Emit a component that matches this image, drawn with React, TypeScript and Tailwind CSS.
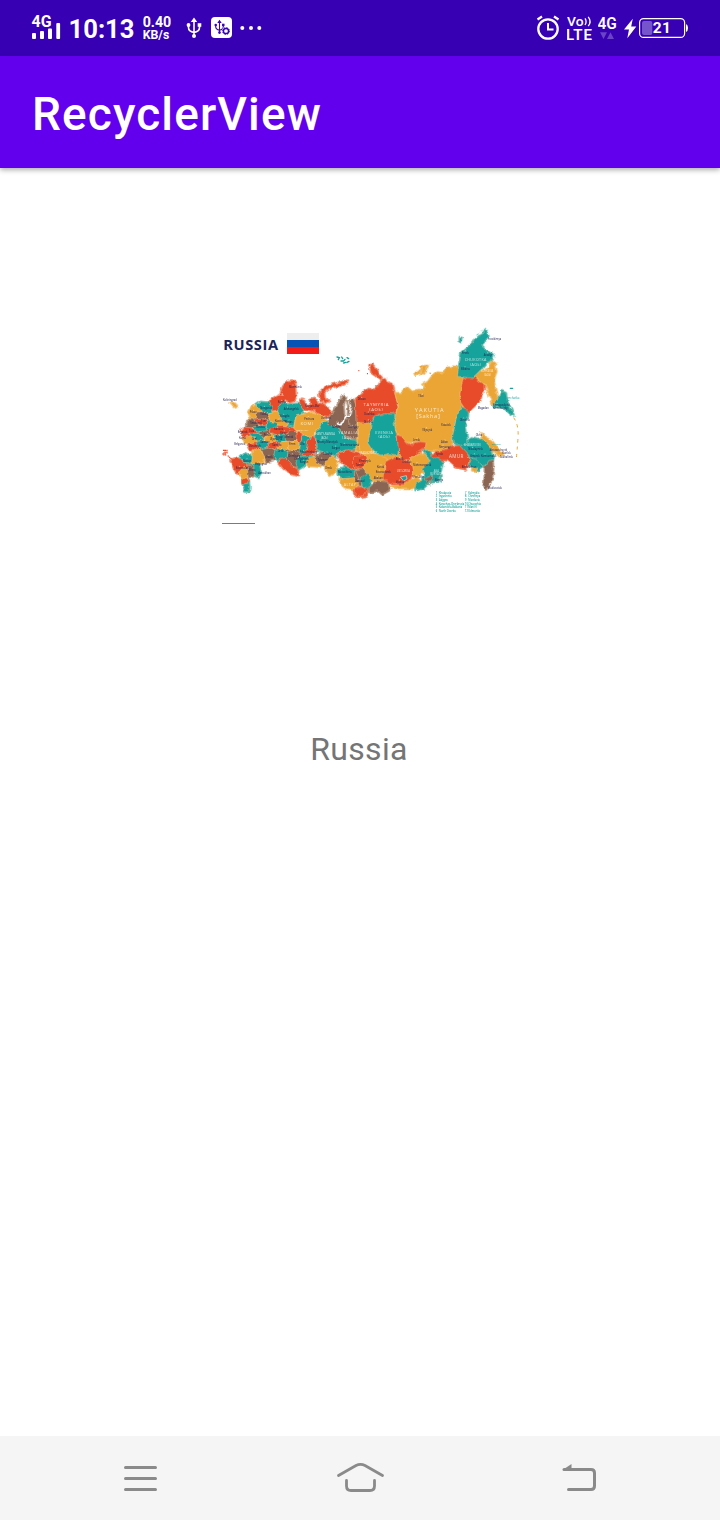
import React from "react";

const RED = "#e84c2b";
const GOLD = "#eba536";
const TEAL = "#16a39b";
const BROWN = "#8a6553";

type Region = [string, string];

/* Map regions, 3 units per pixel */
const westRegions: Region[] = [
  [RED, "M152 236 L176 218 196 204 204 184 216 168 236 166 244 184 246 212 238 226 222 230 210 224 204 238 184 256 166 258Z"],
  [RED, "M312 206 L330 188 352 178 394 166 398 174 370 184 344 190 328 204 330 222 344 226 334 234 318 226Z"],
  [RED, "M254 234 L260 220 268 232 276 244 290 238 286 222 300 218 308 232 326 238 340 250 352 262 344 274 322 272 302 258 282 254 256 250Z"],
  [GOLD, "M98 262 L108 246 126 238 142 256 134 276 104 282Z"],
  [TEAL, "M124 238 L134 230 160 232 172 252 166 264 140 260Z"],
  [BROWN, "M120 262 L146 260 166 266 160 284 130 284Z"],
  [TEAL, "M190 250 L200 232 216 238 248 232 264 250 262 268 242 276 236 304 214 298 196 282 186 262Z"],
  [GOLD, "M160 262 L188 258 200 282 222 294 212 306 186 302 164 288Z"],
  [GOLD, "M244 272 L290 262 326 270 332 286 318 296 304 312 298 330 276 336 262 322 244 326 236 308Z"],
  [BROWN, "M96 288 L118 282 134 298 122 308 96 312Z"],
  [RED, "M120 286 L150 280 160 292 148 304 128 302Z"],
  [TEAL, "M114 306 L138 300 156 306 150 322 122 320Z"],
  [RED, "M76 316 L92 306 118 310 128 326 112 340 86 336Z"],
  [TEAL, "M156 290 L184 292 190 306 170 314 154 304Z"],
  [RED, "M168 308 L202 304 234 308 244 318 222 328 190 330 166 322Z"],
  [BROWN, "M132 320 L160 316 170 330 158 342 134 336Z"],
  [GOLD, "M82 338 L110 332 126 340 118 356 90 358Z"],
  [TEAL, "M104 324 L134 326 148 344 128 348Z"],
  [GOLD, "M150 334 L176 328 188 344 170 354 148 346Z"],
  [TEAL, "M180 330 L214 326 220 346 196 352 180 344Z"],
  [BROWN, "M206 330 L228 318 250 322 248 346 224 352 210 348Z"],
  [RED, "M96 354 L122 350 140 360 128 380 104 374Z"],
  [TEAL, "M122 350 L152 346 162 362 144 372 128 366Z"],
  [RED, "M160 350 L188 348 198 362 180 372 160 368Z"],
  [BROWN, "M142 370 L166 366 188 378 180 404 156 412 144 390Z"],
  [GOLD, "M116 378 L128 372 138 378 150 396 146 412 124 418 108 410Z"],
  [GOLD, "M196 350 L226 348 220 366 204 378 188 364Z"],
  [TEAL, "M180 374 L204 370 218 380 214 402 190 408 176 392Z"],
  [GOLD, "M226 352 L250 346 252 368 236 378 220 370Z"],
  [RED, "M246 318 L262 322 258 354 246 352Z"],
  [TEAL, "M252 364 L262 334 282 332 290 346 276 366 270 388 252 382Z"],
  [BROWN, "M216 380 L236 374 256 388 248 410 260 426 232 426 212 408Z"],
  [RED, "M278 352 L292 332 302 342 302 376 292 396 262 392 274 374Z"],
  [TEAL, "M252 394 L292 392 284 408 266 424 250 434 242 412Z"],
  [RED, "M196 400 L210 398 230 420 248 434 252 454 230 448 206 432 192 414Z"],
  [GOLD, "M282 396 L302 394 322 400 316 426 282 424 272 416Z"],
  [BROWN, "M300 392 L326 378 356 390 342 408 334 422 306 416Z"],
  [TEAL, "M302 322 L322 292 350 288 356 306 382 322 390 340 424 342 432 358 420 374 376 380 362 396 330 382 304 374Z"],
  [BROWN, "M334 296 L352 270 368 238 386 212 394 216 386 244 388 268 394 276 404 258 396 230 414 228 424 252 424 284 432 312 430 342 396 340 372 312Z"],
  [BROWN, "M400 232 L414 220 422 238 428 256 422 304 402 300 398 278Z"],
  [GOLD, "M426 296 L444 300 452 388 420 380 430 352Z"],
  [RED, "M368 386 L400 374 426 382 452 388 450 422 424 434 392 424 374 408Z"],
  [GOLD, "M330 410 L350 394 368 408 364 438 346 450 330 432Z"],
  [TEAL, "M366 432 L392 426 420 436 418 460 388 462 368 450Z"],
  [BROWN, "M418 434 L448 432 452 454 438 484 418 476Z"],
  [GOLD, "M370 462 L416 458 432 478 416 496 388 490Z"],
  [RED, "M418 488 L438 484 460 490 456 512 438 516 420 506Z"],
  [RED, "M46 404 L66 398 90 412 100 428 88 440 66 446 56 430Z"],
  [TEAL, "M76 398 L90 384 112 394 110 416 88 416Z"],
  [GOLD, "M70 438 L90 426 104 438 98 462 82 464Z"],
  [BROWN, "M96 420 L120 416 128 436 116 454 100 458Z"],
  [TEAL, "M116 416 L132 414 138 444 130 456 118 450Z"],
  [TEAL, "M82 472 L100 464 104 486 100 500 90 500Z"],
  [RED, "M82 464 L94 458 102 468 94 480 82 478Z"],
  [GOLD, "M46 234 L58 232 64 244 56 246Z"],
];

const eastRegions: Region[] = [
  [GOLD, "M-10 270 L26 272 40 330 34 388 0 384 -4 330Z"],
  [GOLD, "M30 380 L116 376 130 400 80 420 60 400Z"],
  [RED, "M-14 226 L6 204 26 188 44 194 58 178 62 164 78 162 84 174 98 176 104 204 112 234 108 264 76 268 48 272 20 294 -12 292Z"],
  [RED, "M28 120 L38 118 50 134 54 146 68 152 62 164 46 152 34 144Z"],
  [GOLD, "M104 204 L124 204 142 188 156 200 176 194 188 196 194 184 186 178 204 170 214 156 232 142 250 144 264 128 284 124 302 132 304 154 314 168 300 216 312 244 290 272 284 312 276 330 278 354 262 370 226 376 200 374 176 352 142 352 116 330 104 304 108 266 114 240Z"],
  [GOLD, "M166 144 L182 132 180 140 168 150Z"],
  [GOLD, "M188 124 L204 122 198 136 190 146 184 144Z"],
  [TEAL, "M38 292 L42 274 68 270 76 266 104 268 102 292 108 326 118 362 112 390 84 386 60 392 36 374 22 352 32 322Z"],
  [RED, "M112 330 L126 334 142 356 154 362 164 354 182 350 198 352 196 370 174 384 148 404 126 404 116 386Z"],
  [GOLD, "M8 388 L36 384 68 392 82 402 74 430 76 464 50 470 16 458 10 422Z"],
  [RED, "M-20 392 L6 390 22 396 16 420 6 432 -20 426Z"],
  [BROWN, "M-14 434 L14 430 18 458 -2 470Z"],
  [TEAL, "M0 456 L22 448 34 462 26 486 8 490Z"],
  [BROWN, "M28 484 L52 466 84 472 88 496 66 508 56 498 28 502Z"],
  [RED, "M76 410 L102 396 130 404 154 412 160 438 150 468 132 482 96 478 72 462Z"],
  [RED, "M-18 488 L8 486 20 498 12 512 -8 516 -18 506Z"],
  [GOLD, "M152 400 L178 384 198 388 210 412 192 438 170 456 158 444Z"],
  [GOLD, "M88 484 L128 480 156 464 172 458 188 474 152 492 116 492Z"],
  [TEAL, "M192 378 L206 376 218 390 240 400 248 414 242 442 242 470 210 472 190 490 166 496 166 482 196 452 188 430 212 410Z"],
  [BROWN, "M196 460 L214 452 216 464 202 476Z"],
  [RED, "M228 380 L256 374 274 366 300 360 320 370 328 404 320 434 290 428 264 406 242 406 214 392Z"],
  [TEAL, "M290 274 L304 246 326 250 324 276 314 302 318 322 324 354 304 362 280 354 278 334Z"],
  [RED, "M308 164 L326 152 346 154 358 168 372 176 372 194 360 226 346 244 326 262 314 250 302 232 300 206Z"],
  [TEAL, "M292 154 L298 118 304 82 320 68 340 54 352 34 364 28 374 14 386 30 374 50 364 60 390 84 402 88 396 104 378 116 362 134 342 158 322 158Z"],
  [TEAL, "M296 36 L306 38 302 52 296 48Z"],
  [GOLD, "M342 154 L360 138 384 130 396 108 404 112 410 142 402 164 406 194 414 222 412 240 398 240 386 204 376 178 360 168Z"],
  [TEAL, "M412 222 L424 198 438 204 442 230 454 252 462 272 448 264 430 248 400 244Z"],
  [TEAL, "M302 362 L324 354 334 336 356 342 378 350 394 370 402 394 396 416 370 422 348 410 328 390Z"],
  [TEAL, "M326 396 L352 404 370 426 350 438 328 424Z"],
  [GOLD, "M336 428 L354 426 348 440 336 440Z"],
  [BROWN, "M374 430 L382 408 398 404 400 432 396 466 378 494 370 488 374 456Z"],
  [GOLD, "M362 324 L372 334 398 350 414 370 428 392 418 394 398 372 378 352 366 342Z"],
];

type Label = [number, number, string];
const cities: Label[] = [
  [24, 228, "Kaliningrad"], [222, 189, "Murmansk"], [206, 255, "Arkhangelsk"], [194, 277, "Vologda"], [188, 235, "Karelia"],
  [268, 284, "Pechora"], [136, 253, "Novgorod"], [104, 265, "Pskov"], [136, 271, "Valday"], [180, 291, "Kostroma"], [210, 294, "Kotlas"],
  [106, 296, "Smolensk"], [138, 291, "Tver"], [68, 325, "Bryansk"], [72, 343, "Kursk"], [58, 360, "Belgorod"], [102, 320, "Tula"],
  [122, 309, "Moscow"], [176, 316, "Ivanovo"], [196, 326, "Kirov"], [146, 334, "Penza"], [110, 345, "Orel"], [182, 340, "Kazan"],
  [164, 345, "Ulyanovsk"], [208, 340, "Izhevsk"], [136, 355, "Saratov"], [102, 366, "Voronezh"], [172, 362, "Samara"], [222, 360, "Perm"],
  [256, 360, "Ufa"], [306, 354, "Khanty-Mansiysk"], [350, 372, "Surgut"], [376, 364, "Nizhnevartovsk"], [318, 283, "Vorkuta"],
  [350, 310, "Nadym"], [400, 310, "Urengoy"], [254, 385, "Yekaterinburg"], [324, 390, "Tobolsk"], [308, 408, "Tyumen"],
  [220, 395, "Orenburg"], [188, 380, "Orsk"], [150, 400, "Uralsk"], [120, 420, "Volgograd"], [84, 410, "Rostov"], [62, 433, "Krasnodar"],
  [130, 447, "Astrakhan"], [102, 438, "Elista"], [254, 414, "Kurgan"], [330, 432, "Omsk"], [368, 443, "Novosibirsk"], [422, 424, "Tomsk"],
  [420, 472, "Barnaul"], [428, 226, "Dikson"], [432, 412, "Yeniseysk"], [270, 246, "Naryan-Mar"], [238, 406, "Chelyabinsk"],
  [448, 270, "Dudinka"], [448, 293, "Norilsk"], [610, 216, "Tiksi"], [622, 317, "Vilyuysk"], [678, 304, "Yakutsk"],
  [594, 348, "Lensk"], [678, 354, "Aldan"], [672, 369, "Neryungri"], [542, 406, "Bratsk"], [562, 414, "Ust-Kut"], [486, 428, "Kansk"],
  [482, 444, "Krasnoyarsk"], [476, 463, "Abakan"], [594, 422, "Nizhneangarsk"], [592, 460, "Ulan-Ude"], [542, 474, "Irkutsk"],
  [660, 468, "Borzya"], [662, 389, "Tynda"], [818, 46, "Providenya"], [740, 86, "Pevek"], [806, 92, "Anadyr"], [738, 134, "Bilibino"],
  [788, 252, "Magadan"], [734, 288, "Okhotsk"], [834, 244, "Petropavlovsk"], [834, 252, "Kamchatsky"], [782, 332, "Okha"],
  [824, 378, "Aleksandrovsk"], [862, 387, "Kurilsk"], [855, 398, "Sakhalinsk"], [760, 376, "Nikolayevsk"], [766, 395, "Amursk"],
  [798, 396, "Komsomolsk"], [740, 430, "Birobidzhan"], [819, 491, "Vladivostok"],
];

const legend: [number, number, string, string][] = [
  [662, 506, "1", "Khakassia"], [662, 517, "2", "Ingushetia"], [662, 528, "3", "Adygea"], [662, 539, "4", "Karachay-Cherkessia"],
  [662, 550, "5", "Kabardino-Balkaria"], [662, 561, "6", "North Ossetia"],
  [750, 506, "7", "Kalmykia"], [750, 517, "8", "Chechnya"], [750, 528, "9", "Mordovia"], [750, 539, "10", "Chuvashia"],
  [750, 550, "11", "Mari El"], [750, 561, "12", "Udmurtia"],
];

function RussiaMap() {
  return (
    <svg className="block h-[205px] w-[310px]" viewBox="0 0 930 615" fontFamily="'Open Sans', sans-serif">
      <defs>
        <filter id="coast" x="0" y="0" width="930" height="615" filterUnits="userSpaceOnUse">
          <feTurbulence type="fractalNoise" baseFrequency="0.05" numOctaves="3" seed="4" />
          <feDisplacementMap in="SourceGraphic" scale="14" xChannelSelector="R" yChannelSelector="G" />
        </filter>
      </defs>
      <text x="25" y="74" fontSize="44" fontWeight="700" fill="#1b2458" textLength="164" lengthAdjust="spacing">RUSSIA</text>
      <rect x="216" y="24" width="96" height="21" fill="#eeeeef" />
      <rect x="216" y="45" width="96" height="21" fill="#0753b5" />
      <rect x="216" y="66" width="96" height="21" fill="#f41b17" />
      <g filter="url(#coast)">
        <path d="M116 280 L234 290 244 350 270 390 244 424 210 408 170 390 120 370 88 354 94 310Z" fill={BROWN} />
        <g strokeWidth="5" strokeLinejoin="round">
          {westRegions.map(([fill, d], i) => <path key={i} d={d} fill={fill} stroke={fill} />)}
          <g transform="translate(435 0)">
            {eastRegions.map(([fill, d], i) => <path key={i} d={d} fill={fill} stroke={fill} />)}
          </g>
        </g>
        <g stroke="#f6dcae" strokeOpacity=".75" strokeWidth="1.5" strokeLinejoin="round">
          {westRegions.map(([fill, d], i) => <path key={i} d={d} fill={fill} />)}
          <g transform="translate(435 0)">
            {eastRegions.map(([fill, d], i) => <path key={i} d={d} fill={fill} />)}
          </g>
        </g>
        <path d="M362 288 L376 300 388 290 392 276 404 270 408 250 402 232" fill="none" stroke="#fff" strokeWidth="5" />
      </g>
      <path d="M24 376 h12 v8 h-12 v6 h10 M30 374 v16 M38 392 L52 404" fill="none" stroke={RED} strokeWidth="3.5" strokeDasharray="4 1.5" />
      <g fill="none" stroke={TEAL} strokeWidth="4" strokeLinecap="round">
        <path d="M366 96 l7 2 -3 6 M380 96 l3 5 M378 108 l8 0 4 -5 M396 98 l5 3 M386 114 l6 -2 M396 112 l6 -3" />
        <path d="M886 190 l7 0" />
      </g>
      <path d="M430 137 h3 M462 120 h3 M460 132 h3 M456 146 h3" stroke={RED} strokeWidth="4" />
      <path d="M614 126 l8 -3 M644 146 l3 -2" stroke={GOLD} strokeWidth="5" />
      <path d="M896 278 Q912 300 909 340 T904 400" fill="none" stroke={GOLD} strokeWidth="3" strokeDasharray="10 12" />

      <g fill="#fff" textAnchor="middle" opacity=".75">
        <text x="644" y="260" fontSize="17" letterSpacing="3">YAKUTIA</text>
        <text x="640" y="278" fontSize="17" letterSpacing="2">[Sakha]</text>
        <text x="484" y="244" fontSize="13" letterSpacing="2">TAYMYRIA</text>
        <text x="484" y="257" fontSize="13" letterSpacing="2">(AOk)</text>
        <text x="508" y="327" fontSize="11" letterSpacing="1.5">EVENKIA</text>
        <text x="508" y="340" fontSize="11" letterSpacing="1.5">(AOk)</text>
        <text x="782" y="108" fontSize="11" letterSpacing="1">CHUKOTKA</text>
        <text x="782" y="122" fontSize="11" letterSpacing="1">(AOk)</text>
        <text x="724" y="399" fontSize="14" letterSpacing="1">AMUR</text>
        <text x="276" y="301" fontSize="13" letterSpacing="1.5">KOMI</text>
        <text x="400" y="328" fontSize="11" letterSpacing="2">YAMALIA</text>
        <text x="400" y="341" fontSize="11" letterSpacing="2">(AOk)</text>
        <text x="405" y="484" fontSize="11" letterSpacing="1">ALTAY</text>
        <text x="328" y="331" fontSize="8">KHANTY-MANSIA</text>
        <text x="328" y="341" fontSize="8">(AOk)</text>
        <text x="772" y="364" fontSize="8">KHABAROVSK</text>
        <text x="816" y="142" fontSize="8">KORYAKIA</text>
        <text x="818" y="153" fontSize="8">(AOk)</text>
        <text x="460" y="386" fontSize="8">KRASNOYARSK</text>
        <text x="664" y="440" fontSize="8">AGA</text>
        <text x="664" y="450" fontSize="8">BURYATIA</text>
        <text x="565" y="440" fontSize="8">UST-ORDA</text>
        <text x="190" y="213" fontSize="8">KARELIA</text>
        <text x="262" y="317" fontSize="7">PERMYAKIA</text>
      </g>
      <path d="M556 456 l18 -4 2 10 -10 6Z" fill={TEAL} stroke="#fff" strokeWidth="1.5" />
      <text x="867" y="223" fontSize="9" fill={TEAL}>Kamchatka</text>
      <text x="830" y="359" fontSize="7" fill={TEAL}>Sakhalin</text>
      <g fill="#242052" fontSize="7.5" fontWeight="600" opacity=".8">
        {cities.map(([x, y, name]) => <text key={name} x={x} y={y}>{name}</text>)}
      </g>
      <g fill="#fff" opacity=".7">
        {cities.map(([x, y, name]) => <circle key={name} cx={x + 12} cy={y - 9} r="1.5" />)}
      </g>
      <g fill={TEAL} fontSize="7.5" fontWeight="600">
        {legend.map(([x, y, number, name]) => (
          <text key={name} x={x} y={y}>{number}<tspan x={x + 10}>{name}</tspan></text>
        ))}
      </g>
      <path d="M21 595.5 h99" stroke="#7b7b7b" strokeWidth="3" />
    </svg>
  );
}

function UsbGlyph({ className, color }: { className: string; color: string }) {
  return (
    <svg className={className} viewBox="0 0 16 22" fill="none" stroke={color} strokeWidth="1.6" strokeLinecap="round">
      <path d="M8 3 V19 M2.5 9 V10.5 Q2.5 14.5 8 15.5 Q13.5 14.5 13.5 10.5 V8" />
      <path d="M8 .5 L11.2 5 H4.8Z M6 19 a2 2 0 1 0 4 0 a2 2 0 1 0 -4 0" fill={color} stroke="none" />
      <circle cx="2.5" cy="8" r="1.9" fill={color} stroke="none" />
      <path d="M11.7 6.2 h3.6 v3.6 h-3.6Z" fill={color} stroke="none" />
    </svg>
  );
}

function StatusBar() {
  return (
    <header className="flex h-14 items-start justify-between bg-[#3700b3] pr-8 pl-[31px] text-white">
      <div className="flex h-14">
        <svg className="h-14 w-[38px]" viewBox="31 0 38 56" fill="#fff">
          <text x="31.5" y="27" fontSize="16" fontWeight="700" textLength="20" lengthAdjust="spacingAndGlyphs">4G</text>
          <rect x="32" y="33" width="4" height="6" rx="1" />
          <rect x="40" y="31" width="4" height="8" rx="1" />
          <rect x="48" y="28.5" width="4" height="10.5" rx="1" />
          <rect x="56.3" y="23" width="3.8" height="16" rx="1" />
        </svg>
        <svg className="h-14 w-[74px]" viewBox="69 0 74 56" fill="#fff">
          <text x="68.5" y="38" fontSize="25.5" fontWeight="700" textLength="66" lengthAdjust="spacingAndGlyphs">10:13</text>
        </svg>
        <svg className="h-14 w-[43px]" viewBox="143 0 43 56" fill="#fff" fontWeight="700">
          <text x="142.7" y="27.3" fontSize="14" textLength="28.5" lengthAdjust="spacingAndGlyphs">0.40</text>
          <text x="142.7" y="39.3" fontSize="12" textLength="26.5" lengthAdjust="spacingAndGlyphs">KB/s</text>
        </svg>
        <UsbGlyph className="mt-[17px] h-[22px] w-4" color="#fff" />
        <div className="mt-[17px] ml-[9px] flex size-[21px] rounded-[4px] bg-white pl-[3px]">
          <UsbGlyph className="mt-[2px] h-[16px] w-[11px] shrink-0" color="#3700b3" />
          <svg className="mt-[10px] -ml-[3px] size-[8px] shrink-0" viewBox="0 0 8 8">
            <circle cx="4" cy="4" r="4" fill="#fff" />
            <circle cx="4" cy="4" r="2.6" fill="none" stroke="#3700b3" strokeWidth="1.5" />
            <circle cx="4" cy="4" r="3.4" fill="none" stroke="#3700b3" strokeWidth="1" strokeDasharray="1.4 1.27" />
          </svg>
        </div>
        <svg className="mt-[25px] ml-2 h-[6px] w-6" viewBox="0 0 24 6" fill="#fff">
          <circle cx="2.3" cy="3" r="2" /><circle cx="11" cy="3" r="2" /><circle cx="19.3" cy="3" r="2" />
        </svg>
      </div>
      <div className="flex h-14">
        <svg className="h-14 w-[31px]" viewBox="536 0 31 56" fill="none" stroke="#fff">
          <circle cx="548" cy="29" r="9.7" strokeWidth="2.3" />
          <path d="M548 23 V29.5 H553.5" strokeWidth="2" />
          <path d="M537.5 19.5 L542 16.5 M554 16.5 L558.5 19.5" strokeWidth="2.3" />
        </svg>
        <svg className="h-14 w-[31px]" viewBox="567 0 31 56" fill="#fff">
          <text x="567" y="25.5" fontSize="13" fontWeight="500" textLength="16.5" lengthAdjust="spacingAndGlyphs">Vo</text>
          <path d="M585 18.3 Q587.2 21.5 585 25 M588.2 16.8 Q592 21.5 588.2 26" fill="none" stroke="#fff" strokeWidth="1.3" />
          <text x="566" y="40" fontSize="15" fontWeight="600" textLength="26" lengthAdjust="spacing">LTE</text>
        </svg>
        <svg className="h-14 w-[26px]" viewBox="598 0 26 56" fill="#fff">
          <text x="597.5" y="29.2" fontSize="16" fontWeight="600" textLength="19.3" lengthAdjust="spacingAndGlyphs">4G</text>
          <path d="M600 32.3 H607 L603.5 39Z M607 39 H614 L610.5 32.3Z" fill="#6a43c6" />
        </svg>
        <svg className="h-14 w-[15px]" viewBox="624 0 15 56" fill="#fff">
          <path d="M632.8 18.8 L624 29.5 H629 L627.3 38.3 L636.3 26.5 H631.2Z" />
        </svg>
        <svg className="h-14 w-[49px]" viewBox="639 0 49 56" fill="#fff">
          <rect x="639.6" y="18.6" width="45" height="18.8" rx="4" fill="none" stroke="#fff" strokeWidth="1.2" />
          <path d="M686 24 Q688 25 688 28 Q688 31 686 32Z" />
          <rect x="642" y="21" width="10.3" height="14" rx="2" fill="#7655cc" />
          <text x="652.8" y="33" fontSize="15.5" fontWeight="700" textLength="18" lengthAdjust="spacing">21</text>
        </svg>
      </div>
    </header>
  );
}

export default function App() {
  return (
    <div className="flex h-[1520px] w-[720px] flex-col overflow-hidden bg-white font-['Roboto',sans-serif]">
      <StatusBar />
      <div className="flex h-28 items-center bg-[#6200ee] pt-1 pl-8 shadow-[0_2px_5px_rgba(0,0,0,0.32)]">
        <h1 className="text-[46px] leading-[56px] font-medium tracking-[1.1px] text-white">RecyclerView</h1>
      </div>
      <main className="flex flex-1 flex-col items-center pt-[157px]">
        <div className="ml-5"><RussiaMap /></div>
        <p className="mt-[199px] -ml-[2px] text-[32px] leading-10 tracking-[0.35px] text-[#757575]">Russia</p>
      </main>
      <nav className="flex h-[84px] items-center justify-between bg-[#f5f5f5] px-[120px]">
        <svg className="h-[84px] w-10" viewBox="120 1436 40 84" stroke="#8a8a8a" strokeWidth="3" strokeLinecap="round">
          <path d="M125.5 1467.5 H155.5 M125.5 1478.5 H155.5 M125.5 1489.5 H155.5" />
        </svg>
        <svg className="h-[84px] w-[50px]" viewBox="335 1436 50 84" fill="none" stroke="#8a8a8a" strokeWidth="2.8" strokeLinecap="round">
          <path d="M338.5 1475.5 L356 1465.5 Q360.5 1463.3 365 1465.5 L382.5 1475.5" />
          <path d="M346.5 1480.5 V1486 Q346.5 1490.5 351 1490.5 H370 Q374.5 1490.5 374.5 1486 V1480.5" />
        </svg>
        <svg className="h-[84px] w-10" viewBox="560 1436 40 84" fill="none" stroke="#8a8a8a" strokeWidth="3" strokeLinecap="round">
          <path d="M564 1469.5 H591 Q594.5 1469.5 594.5 1473 V1486 Q594.5 1489.5 591 1489.5 H568.5" />
          <path d="M562.5 1470 L571.5 1464 V1470Z" fill="#8a8a8a" stroke="none" />
        </svg>
      </nav>
    </div>
  );
}
